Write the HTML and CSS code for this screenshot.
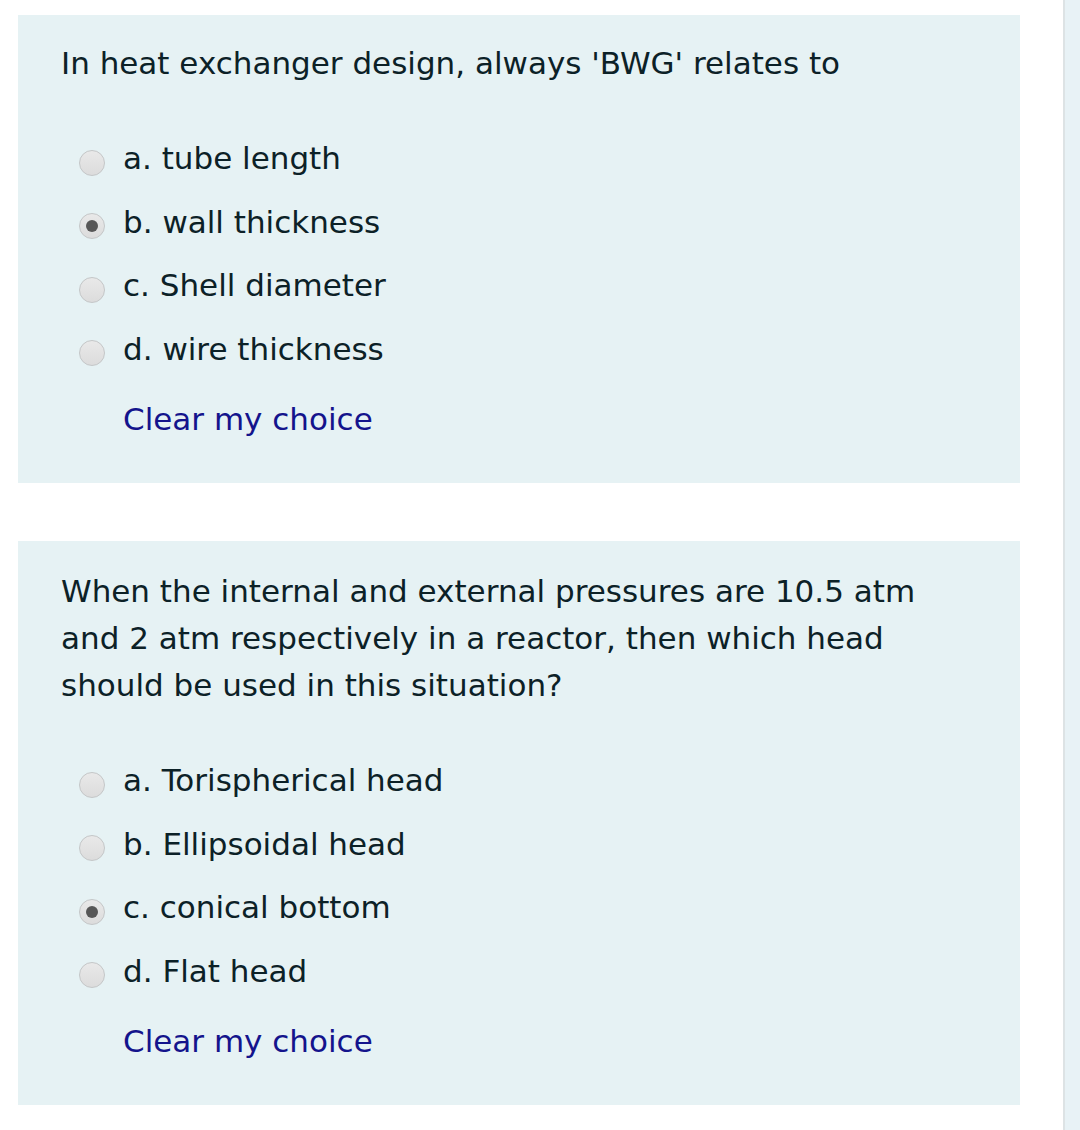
FILE: index.html
```html
<!DOCTYPE html>
<html lang="en">
<head>
<meta charset="utf-8">
<title>Quiz</title>
<link rel="stylesheet" href="styles.css">
</head>
<body>
<div class="page">
  <main class="main">
    <section class="card card-1">
      <p class="question">In heat exchanger design, always 'BWG' relates to</p>
      <div class="answers">
        <label class="option"><span class="radio"></span><span class="label">a. tube length</span></label>
        <label class="option"><span class="radio checked"></span><span class="label">b. wall thickness</span></label>
        <label class="option"><span class="radio"></span><span class="label">c. Shell diameter</span></label>
        <label class="option"><span class="radio"></span><span class="label">d. wire thickness</span></label>
      </div>
      <a class="clear" href="#">Clear my choice</a>
    </section>
    <section class="card card-2">
      <p class="question">When the internal and external pressures are 10.5 atm<br>and 2 atm respectively in a reactor, then which head<br>should be used in this situation?</p>
      <div class="answers">
        <label class="option"><span class="radio"></span><span class="label">a. Torispherical head</span></label>
        <label class="option"><span class="radio"></span><span class="label">b. Ellipsoidal head</span></label>
        <label class="option"><span class="radio checked"></span><span class="label">c. conical bottom</span></label>
        <label class="option"><span class="radio"></span><span class="label">d. Flat head</span></label>
      </div>
      <a class="clear" href="#">Clear my choice</a>
    </section>
  </main>
  <aside class="side"></aside>
</div>
</body>
</html>
```

FILE: styles.css
```css
html, body {
  margin: 0;
  padding: 0;
  background: #ffffff;
}
body {
  font-family: "DejaVu Sans", "Open Sans", sans-serif;
  color: #0c2127;
  font-size: 31px;
}
.page {
  display: flex;
  min-height: 1130px;
}
.main {
  width: 1002px;
  padding: 15px 0 0 18px;
  display: flex;
  flex-direction: column;
  gap: 58px;
}
.side {
  margin-left: 43px;
  width: 15px;
  border-left: 2px solid #dde3e5;
  background: #e8f2f6;
}
.card {
  background: #e6f2f4;
  padding: 25px 20px 40px 43px;
}
.card-2 {
  padding-top: 27px;
}
.question {
  margin: 0;
  line-height: 47px;
  white-space: nowrap;
}
.answers {
  display: flex;
  flex-direction: column;
  margin-top: 40px;
}
.option {
  display: flex;
  align-items: center;
  height: 63.5px;
}
.radio {
  box-sizing: border-box;
  width: 26px;
  height: 26px;
  margin: 8px 18.5px 0 17.5px;
  border-radius: 50%;
  border: 1px solid #c4c6c7;
  background: linear-gradient(#e9e9e9, #dcdcdc);
  display: flex;
  align-items: center;
  justify-content: center;
  flex: none;
}
.radio.checked::after {
  content: "";
  width: 12px;
  height: 12px;
  border-radius: 50%;
  background: #575757;
}
.label {
  line-height: 47px;
}
.clear {
  display: block;
  margin: 15px 0 0 62px;
  line-height: 47px;
  color: #14148c;
  text-decoration: none;
}
```
